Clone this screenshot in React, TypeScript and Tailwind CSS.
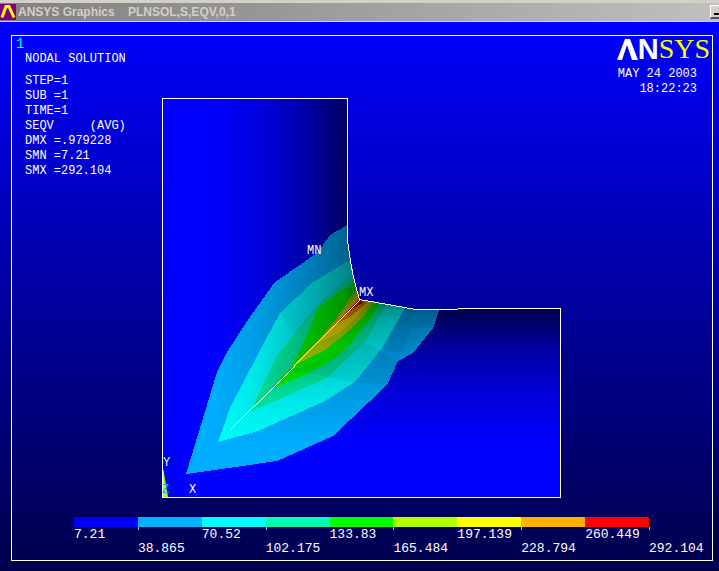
import React from "react";

type Stop = { color: string; label: string };

const legend: Stop[] = [
  { color: "bg-[#0000ff]", label: "7.21" },
  { color: "bg-[#00b2ff]", label: "38.865" },
  { color: "bg-[#00ffff]", label: "70.52" },
  { color: "bg-[#00ffb2]", label: "102.175" },
  { color: "bg-[#00ff00]", label: "133.83" },
  { color: "bg-[#b2ff00]", label: "165.484" },
  { color: "bg-[#ffff00]", label: "197.139" },
  { color: "bg-[#ffb200]", label: "228.794" },
  { color: "bg-[#ff0000]", label: "260.449" },
];

const results = [
  "STEP=1",
  "SUB =1",
  "TIME=1",
  "SEQV     (AVG)",
  "DMX =.979228",
  "SMN =7.21",
  "SMX =292.104",
];

const outline =
  "M162.5 98.5H347.5V240L350 258L353 275L357 291L359.5 299.5L385 304L413 309H458L460 308.5H560.5V497.5H162.5Z";

const contourEdge =
  "M348 225L330 235L318 252L303 263L275 282L250 317L227 352L217 372L186 474L277 461L333 436L387 385L398 361L413 353L433 328L440 308L360 290Z";

const upperHalf = "M162 98H362V297L359.5 299.5L162 497Z";
const lowerHalf = "M359.5 299.5L362 297H561V498H162V497Z";

function TitleBar() {
  return (
    <header className="border-t-2 border-b border-[#d4d0c8] bg-[#d4d0c8] pt-px">
      <div className="flex h-[18px] items-center bg-linear-to-r from-[#808080] to-[#c0c0c0]">
        <svg viewBox="0 0 16 16" className="mr-0.5 size-4 shrink-0" aria-hidden="true">
          <rect width="16" height="16" fill="#800080" />
          <path d="M2 13.5 6 2.500H9L14 13.5" fill="none" stroke="#ffff00" strokeWidth="3" />
        </svg>
        <h1 className="flex-1 truncate text-[12px] leading-[18px] font-bold whitespace-pre text-[#d4d0c8]">
          {"ANSYS Graphics    PLNSOL,S,EQV,0,1"}
        </h1>
        <button
          type="button"
          aria-label="Minimize"
          className="flex h-[14px] w-[9px] items-end justify-end border-t border-b-2 border-l border-t-white border-b-[#505050] border-l-white bg-[#d4d0c8] pb-0.5"
        >
          <span className="h-0.5 w-[5px] bg-black" />
        </button>
      </div>
    </header>
  );
}

function Logo() {
  return (
    <div className="flex h-[26px] items-center justify-end pr-0.5" role="img" aria-label="ANSYS">
      <svg viewBox="0 0 21 21" className="h-[21px] w-[21px]" aria-hidden="true">
        <path d="M0 21 8 0H13L21 21H15L10 6 5 21Z" fill="white" />
      </svg>
      <span className="text-[29px] leading-[26px] font-bold text-white">N</span>
      <span className="font-['Liberation_Serif',serif] text-[28px] leading-[26px] text-[#ffff00]">SYS</span>
    </div>
  );
}

function ContourPlot() {
  return (
    <svg
      viewBox="162 98 450 400"
      className="mt-[62px] block h-auto w-full overflow-visible"
      role="img"
      aria-label="Equivalent stress contours"
    >
      <defs>
        <linearGradient id="shadeX" gradientUnits="userSpaceOnUse" x1="212" y1="0" x2="359" y2="0">
          <stop offset="0" stopColor="#000" stopOpacity="0" />
          <stop offset="0.33" stopColor="#000" stopOpacity="0.13" />
          <stop offset="0.66" stopColor="#000" stopOpacity="0.36" />
          <stop offset="0.92" stopColor="#000" stopOpacity="0.62" />
          <stop offset="1" stopColor="#000" stopOpacity="0.66" />
        </linearGradient>
        <linearGradient id="shadeY" gradientUnits="userSpaceOnUse" x1="0" y1="447" x2="0" y2="300">
          <stop offset="0" stopColor="#000" stopOpacity="0" />
          <stop offset="0.33" stopColor="#000" stopOpacity="0.13" />
          <stop offset="0.66" stopColor="#000" stopOpacity="0.36" />
          <stop offset="0.92" stopColor="#000" stopOpacity="0.68" />
          <stop offset="1" stopColor="#000" stopOpacity="0.72" />
        </linearGradient>
        <linearGradient id="softX" gradientUnits="userSpaceOnUse" x1="212" y1="0" x2="359" y2="0">
          <stop offset="0" stopColor="#000" stopOpacity="0" />
          <stop offset="0.33" stopColor="#000" stopOpacity="0.11" />
          <stop offset="0.66" stopColor="#000" stopOpacity="0.28" />
          <stop offset="0.9" stopColor="#000" stopOpacity="0.42" />
          <stop offset="1" stopColor="#000" stopOpacity="0.52" />
        </linearGradient>
        <linearGradient id="softY" gradientUnits="userSpaceOnUse" x1="0" y1="447" x2="0" y2="300">
          <stop offset="0" stopColor="#000" stopOpacity="0" />
          <stop offset="0.33" stopColor="#000" stopOpacity="0.1" />
          <stop offset="0.66" stopColor="#000" stopOpacity="0.23" />
          <stop offset="0.88" stopColor="#000" stopOpacity="0.36" />
          <stop offset="1" stopColor="#000" stopOpacity="0.52" />
        </linearGradient>
        <clipPath id="body">
          <path d={outline} />
        </clipPath>
        <clipPath id="contours">
          <path d={contourEdge} />
        </clipPath>
      </defs>
      <g clipPath="url(#body)" shapeRendering="crispEdges">
        <path d={outline} fill="#0000ff" />
        <path d={upperHalf} fill="url(#shadeX)" />
        <path d={lowerHalf} fill="url(#shadeY)" />
        <path d={contourEdge} fill="#00aeff" />
        <path
          d="M350 260L313 282L280 313L257 356L230 408L218 442L258 431L325 401L356 381L382 348L405 308L360 290Z"
          fill="#00ffff"
        />
        <path
          d="M353 275L322 300L305 320L277 356L250 412L327 378L365 342L388 302L360 290Z"
          fill="#00f5a8"
        />
        <path
          d="M355 283L337 293L318 308L302 346L291 367L270 390L305 375L333 360L353 340L372 317L380 302L360 292Z"
          fill="#00ff00"
        />
        <path d="M357 288L335 320L322 336L293 366L325 350L350 330L365 314L374 302L360 296Z" fill="#b8dc00" />
        <path d="M358 293L346 308L330 329L314 345L340 332L355 319L370 302L360 297Z" fill="#f4e000" />
        <path d="M359 299L333 326L350 317L367 303Z" fill="#f09000" />
        <path d="M359 299L346 313L364 302Z" fill="#f01000" />
        <path d="M350 260L313 282L280 313L295 336L318 308L353 275Z" fill="#00a0d0" opacity="0.14" />
        <path d="M293 370L312 374L355 382L387 385L398 361L365 342Z" fill="#004060" opacity="0.08" />
        <path d="M404 309L384 350L403 352L410 328L434 328L439 309Z" fill="#003060" opacity="0.1" />
        <g clipPath="url(#contours)">
          <path d={upperHalf} fill="url(#softX)" />
          <path d={lowerHalf} fill="url(#softY)" />
        </g>
      </g>
      <path d="M162 470H163.500L168 497H162Z" fill="#b2ff00" />
      <path d={outline} fill="none" stroke="white" shapeRendering="crispEdges" />
      <path d="M359.500 299.500L230 430" stroke="white" strokeWidth="0.9" shapeRendering="crispEdges" />
      <g fill="white" className="font-['Liberation_Mono',monospace] text-[12px]">
        <text x="307" y="254">MN</text>
        <text x="359" y="296">MX</text>
        <text x="189" y="493">X</text>
        <text x="163" y="466" fill="#dcff80">Y</text>
        <text x="162" y="493" fill="#00b2ff">Z</text>
      </g>
    </svg>
  );
}

function Legend() {
  return (
    <ol className="mt-[19px] flex pr-[63px] pb-1 pl-[62px] text-[13px] leading-[14px]">
      {legend.map((stop, i) => (
        <li key={stop.label} className="min-w-0 flex-1">
          <div className={`h-2.5 ${stop.color}`} />
          {i % 2 === 1 ? (
            <div className="h-[3px] w-px bg-[#c0c0c0]" />
          ) : null}
          <div className={i % 2 === 1 ? "mt-3" : "mt-px"}>{stop.label}</div>
        </li>
      ))}
      <li className="w-0">
        <div className="mt-2.5 h-[3px] w-px bg-[#c0c0c0]" />
        <div className="mt-3">292.104</div>
      </li>
    </ol>
  );
}

export default function App() {
  return (
    <div className="flex min-h-screen flex-col font-['Liberation_Sans',Arial,sans-serif]">
      <TitleBar />
      <main className="flex-1 bg-linear-to-b from-[#0000ff] to-[#00004c] pt-[13px] pr-1.5 pb-2.5 pl-[11px]">
        <div className="border border-white font-['Liberation_Mono',monospace] text-white">
          <div className="grid grid-cols-[150px_1fr_100px]">
            <section className="pt-px text-[12px] leading-[15px] whitespace-pre">
              <p className="pl-1 text-[14px] text-[#00ffff]">1</p>
              <h2 className="pl-[13px]">NODAL SOLUTION</h2>
              <ul className="mt-[7px] pl-[13px]">
                {results.map((line) => (
                  <li key={line}>{line}</li>
                ))}
              </ul>
            </section>
            <ContourPlot />
            <section className="font-['Liberation_Sans',Arial,sans-serif]">
              <Logo />
              <div className="mt-[5px] flex flex-col items-end pr-[15px] font-['Liberation_Mono',monospace] text-[12px] leading-[15px] whitespace-pre">
                <p>MAY 24 2003</p>
                <p>18:22:23</p>
              </div>
            </section>
          </div>
          <Legend />
        </div>
      </main>
    </div>
  );
}
